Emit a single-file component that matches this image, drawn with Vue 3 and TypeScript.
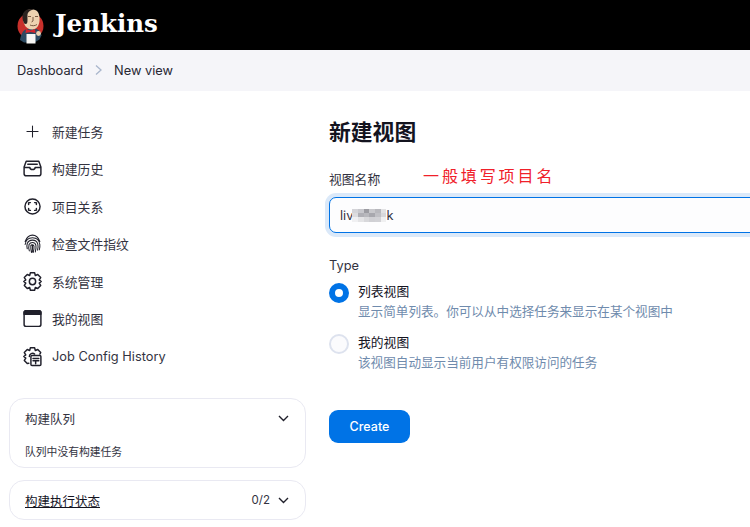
<template>
  <div class="page">
    <header class="top">
      <svg class="logo" width="30" height="38" viewBox="0 0 30 38">
        <circle cx="14.500" cy="20" r="13" fill="#c8302b" />
        <path d="M4 34c1-6 3-10 7-11l8-.5c4 1 6 4 6.500 7l-2 4-5 3H8z" fill="#2c4a61" />
        <path d="M8 7c2-4 9-5 13-2 2 2 3 6 2.500 10-.5 5-3 8-7 8.500-4 0-7-2-8.500-6C6.500 14 7 10 8 7z" fill="#eed2b0" />
        <path d="M8.500 5.500C11 3 15 2.500 18 3.500c-3 .5-6 2-6.500 5-.3 3 .5 7-.5 9-1.500 1-3 .5-3.500-1.500C6 12 6 8 8.500 5.500z" fill="#2b2320" />
        <path d="M12 10.500h3M19 10.500h3M17 11v4l-1.500 1M14 19c2 1 5 1 7-.5" stroke="#5d3c2a" stroke-width=".8" fill="none" />
        <path d="M10 23l4.500 1.500L19 23l.5 4-5-1-5 1z" fill="#d8252c" />
        <rect x="10.500" y="28" width="9" height="9.500" fill="#f7f7f4" />
        <circle cx="22.500" cy="27.500" r="2.400" fill="#eed2b0" />
      </svg>
      <span class="brand">Jenkins</span>
    </header>

    <nav class="crumbs">
      <span>Dashboard</span>
      <svg width="10" height="12" viewBox="0 0 10 12" class="sep"><path d="M2 1.500 7 6l-5 4.500" fill="none" stroke="#a9b6cc" stroke-width="1.300" /></svg>
      <span>New view</span>
    </nav>

    <div class="body">
      <aside class="side">
        <ul class="tasks">
          <li>
            <svg viewBox="0 0 20 20" class="thin"><path d="M10 4.700v10.600M4.700 10h10.600" /></svg>
            新建任务
          </li>
          <li>
            <svg viewBox="0 0 20 20"><path d="M4 3h12l2 5.500V15a2 2 0 0 1-2 2H4a2 2 0 0 1-2-2V8.500zM2 9h5.500a2.500 2 0 0 0 5 0H18M5.500 6h9" /></svg>
            构建历史
          </li>
          <li>
            <svg viewBox="0 0 20 20"><circle cx="10" cy="10" r="7.200" /><path d="M8 6.300H6.700l-.4.400V8M12 6.300h1.300l.4.400V8M8 13.700H6.700l-.4-.4V12M12 13.700h1.300l.4-.4V12" /></svg>
            项目关系
          </li>
          <li>
            <svg viewBox="0 0 20 20" class="thin"><path d="M3 8c1.500-4 4-6 7-6s5.500 2 7 6M3 11c.5-4 3-6.500 7-6.500S16.500 7 17 11c.2 2 0 3.500-.5 5M5 15c-.5-2-.5-3.500 0-5 .8-2 2.700-3.200 5-3.200s4.200 1.200 5 3.500c.5 2 .4 4-.2 6M7 17c-.7-2.500-.7-4.500-.3-6 .5-1 1.800-2 3.300-2s2.800 1 3.200 2.500c.4 2 .2 4-.5 6.500M9 18.500c-.7-2.500-.7-4.500-.6-6.500 .3-1 2.700-1 3 .5.2 2 0 4-.7 6M10 12c0 2.500 0 4.500-.2 6" /></svg>
            检查文件指纹
          </li>
          <li>
            <svg viewBox="0 0 20 20"><path d="M8 1.700h4l.7 2.600 2.300-1 2.800 3-1.400 2.200 1.900 1.500-1.900 1.500 1.400 2.200-2.800 3-2.300-1-.7 2.600H8l-.7-2.600-2.300 1-2.800-3 1.400-2.200L1.700 10l1.900-1.500-1.400-2.200 2.800-3 2.300 1z" /><circle cx="10" cy="10" r="3" /></svg>
            系统管理
          </li>
          <li>
            <svg viewBox="0 0 20 20"><rect x="2" y="2.500" width="16" height="15" rx="1.800" /><path class="band" d="M2 6V4.300a1.800 1.800 0 0 1 1.800-1.800h12.400A1.800 1.800 0 0 1 18 4.300V6z" /></svg>
            我的视图
          </li>
          <li>
            <svg viewBox="0 0 20 20"><path d="M6.500 16.500 5 16.700l-2.800-3 1.400-2.200L1.700 10l1.900-1.500-1.400-2.200 2.800-3 2.300 1 .7-2.600h4l.7 2.600 2.300-1 2.800 3-.8 1.400" /><path d="M7 10a3 3 0 0 1 5-2.300" /><rect x="8.500" y="9" width="9.500" height="9.500" rx="1" /><path d="M10.500 12h5.500M10.500 14h5.500M13 14v3" /></svg>
            Job Config History
          </li>
        </ul>

        <section class="card">
          <div class="card-head">
            <span>构建队列</span>
            <svg class="chev" width="11" height="7" viewBox="0 0 11 7"><path d="M1 1l4.500 4.500L10 1" /></svg>
          </div>
          <p class="card-note">队列中没有构建任务</p>
        </section>

        <section class="card">
          <div class="card-head">
            <u>构建执行状态</u>
            <span class="count">0/2</span>
            <svg class="chev" width="11" height="7" viewBox="0 0 11 7"><path d="M1 1l4.500 4.500L10 1" /></svg>
          </div>
        </section>
      </aside>

      <main class="form">
        <h1>新建视图</h1>
        <div class="name-field">
          <label>视图名称</label>
          <span class="remark">一般填写项目名</span>
          <div class="name-input">
            <span>liv</span>
            <span class="mosaic"><i v-for="(c, i) in mosaic" :key="i" :style="{ background: c }" /></span>
            <span>k</span>
          </div>
        </div>

        <div class="type-label">Type</div>
        <div v-for="t in types" :key="t.name" class="radio">
          <span class="dot" :class="{ on: t.on }" />
          <div>
            <div class="radio-name">{{ t.name }}</div>
            <div class="radio-desc">{{ t.desc }}</div>
          </div>
        </div>

        <button class="create">Create</button>
      </main>
    </div>
  </div>
</template>

<script setup lang="ts">
const mosaic = [
  '#d4d4d8', '#c8c8cd', '#9c9ca2', '#c8c8cc', '#b8b8bd', '#e2e2e4',
  '#dcdcdf', '#b0b0b6', '#b8b8bd', '#a8a8ae', '#c0c0c5', '#d8d8db',
  '#f0f0f2', '#e4e4e6', '#d8d8db', '#d0d0d4', '#d2d2d6', '#f0f0f1',
]

const types = [
  { name: '列表视图', desc: '显示简单列表。你可以从中选择任务来显示在某个视图中', on: true },
  { name: '我的视图', desc: '该视图自动显示当前用户有权限访问的任务', on: false },
]
</script>

<style>
html,
body {
  margin: 0;
  overflow: hidden;
  background: #fff;
}
</style>

<style scoped>
.page {
  width: 750px;
  height: 527px;
  overflow: hidden;
  font-family: Inter, "Noto Sans CJK SC", sans-serif;
  font-size: 12.800px;
  color: #14141f;
}
.top {
  height: 50px;
  background: #000;
  display: flex;
  align-items: center;
  padding-left: 16px;
  gap: 9px;
}
.logo {
  flex: none;
}
.brand {
  font-family: "DejaVu Serif", serif;
  font-weight: 700;
  font-size: 24.500px;
  color: #fff;
  padding-bottom: 3px;
}
.crumbs {
  box-sizing: border-box;
  height: 41px;
  background: #f5f5f9;
  display: flex;
  align-items: center;
  padding: 0 0 1px 17px;
  gap: 10.500px;
  color: #272733;
}
.body {
  display: flex;
  padding: 0 0 0 9px;
}
.side {
  width: 297px;
  flex: none;
  padding-top: 21.700px;
}
.tasks {
  list-style: none;
  margin: 0 0 23.300px;
  padding: 0 0 0 12.500px;
}
.tasks li {
  height: 37.500px;
  display: flex;
  align-items: center;
  gap: 9.500px;
  color: #33333f;
}
.tasks svg {
  width: 21px;
  height: 21px;
  flex: none;
  fill: none;
  stroke: #20202b;
  stroke-width: 1.400;
  stroke-linejoin: round;
  stroke-linecap: round;
}
.tasks svg.thin {
  stroke-width: 1;
}
.tasks .band {
  fill: #20202b;
}
.card {
  border: 1px solid #e9e9f2;
  border-radius: 15px;
  margin-bottom: 12px;
  padding: 0 16px 0 15px;
}
.card-head {
  height: 38px;
  display: flex;
  align-items: center;
  justify-content: space-between;
  font-size: 12.500px;
  color: #33333f;
}
.card:first-of-type .card-head {
  height: 39px;
}
.card-head u {
  color: #14141f;
}
.count {
  margin-left: auto;
  margin-right: 8px;
  font-size: 11.500px;
}
.chev {
  fill: none;
  stroke: #20202b;
  stroke-width: 1.400;
}
.card-note {
  margin: 0;
  padding: 7px 0 6px;
  font-size: 10.800px;
  line-height: 16px;
  color: #33333f;
}
.form {
  flex: none;
  width: 500px;
  margin-left: 23px;
  padding-top: 25px;
}
h1 {
  margin: 0;
  font-size: 21.800px;
  line-height: 32px;
  font-weight: 700;
}
.name-field {
  position: relative;
  margin-top: 22px;
}
.name-field label {
  display: block;
  line-height: 20px;
  margin-bottom: 7px;
  color: #33333f;
}
.remark {
  position: absolute;
  left: 94px;
  top: -6px;
  font-size: 16px;
  line-height: 24px;
  letter-spacing: 2.900px;
  color: #f0202a;
}
.name-input {
  box-sizing: border-box;
  width: 460px;
  height: 35.500px;
  display: flex;
  align-items: center;
  padding: 1px 0 0 10px;
  border: 1.500px solid #0073e6;
  border-radius: 7px;
  background: #fdfdfe;
  box-shadow: 0 0 0 4px #dbe9f9;
  color: #33333f;
}
.mosaic {
  display: grid;
  grid-template-columns: repeat(6, 1fr);
  width: 34px;
  height: 13px;
  margin-left: -1px;
  filter: blur(0.4px);
}
.type-label {
  margin-top: 23px;
  line-height: 20px;
  color: #33333f;
}
.radio {
  display: flex;
  gap: 9px;
  margin-top: 6px;
  margin-bottom: 11.500px;
}
.dot {
  box-sizing: border-box;
  flex: none;
  width: 20px;
  height: 20px;
  margin-top: 1px;
  border-radius: 50%;
  border: 2px solid #dde2ee;
  background: #fbfbfd;
}
.dot.on {
  border: 6px solid #0073e6;
  background: #fff;
}
.radio-name {
  line-height: 20px;
}
.radio-desc {
  font-size: 12.600px;
  line-height: 20px;
  color: #6f8bad;
}
.create {
  display: block;
  width: 81px;
  height: 33px;
  margin-top: 36.500px;
  border: 0;
  border-radius: 9px;
  background: #0073e6;
  color: #fff;
  font: 500 12.500px Inter, sans-serif;
}
</style>
